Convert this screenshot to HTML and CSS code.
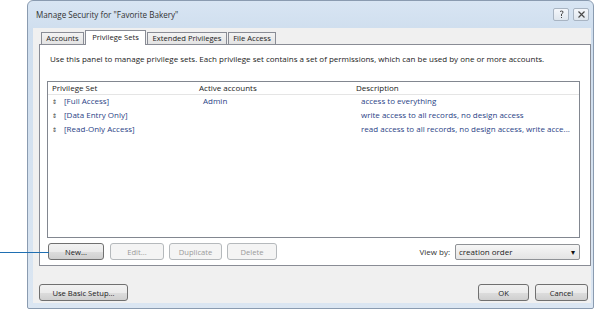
FILE: index.html
```html
<!DOCTYPE html>
<html>
	<head>
		<meta charset="UTF-8" />
		<title>Manage Security</title>
		<link rel="stylesheet" href="styles.css">
	</head>
	<body>
		<div class="stage">
			<div class="callout"></div>
			<div class="dialog">
				<div class="titlebar">
					<span class="title">Manage Security for "Favorite Bakery"</span>
					<div class="caption-buttons">
						<span class="cap-btn">
							<svg width="9" height="9" viewBox="0 0 9 9"><path d="M3 1.5 Q4.5 0.5 6 1.5 Q6.5 3 4.5 4 L4.5 6 M4.5 7 L4.5 8" fill="none" stroke="#4a4a4a" stroke-width="1"/></svg>
						</span>
						<span class="cap-btn">
							<svg width="9" height="9" viewBox="0 0 9 9"><path d="M1.5 1.5 L7.5 7.5 M7.5 1.5 L1.5 7.5" fill="none" stroke="#4a4a4a" stroke-width="1.2"/></svg>
						</span>
					</div>
				</div>
				<div class="client">
					<div class="tabs">
						<span class="tab tab-accounts">Accounts</span>
						<span class="tab tab-sets active">Privilege Sets</span>
						<span class="tab tab-ext">Extended Privileges</span>
						<span class="tab tab-file">File Access</span>
					</div>
					<div class="panel">
						<p class="intro">Use this panel to manage privilege sets. Each privilege set contains a set of permissions, which can be used by one or more accounts.</p>
						<div class="list">
							<div class="list-head">
								<span class="col-name">Privilege Set</span>
								<span class="col-acct">Active accounts</span>
								<span class="col-desc">Description</span>
							</div>
							<div class="row">
								<span class="col-name"><span class="handle">&#8661;</span>[Full Access]</span>
								<span class="col-acct">Admin</span>
								<span class="col-desc">access to everything</span>
							</div>
							<div class="row">
								<span class="col-name"><span class="handle">&#8661;</span>[Data Entry Only]</span>
								<span class="col-acct"></span>
								<span class="col-desc">write access to all records, no design access</span>
							</div>
							<div class="row">
								<span class="col-name"><span class="handle">&#8661;</span>[Read-Only Access]</span>
								<span class="col-acct"></span>
								<span class="col-desc">read access to all records, no design access, write acce...</span>
							</div>
						</div>
						<div class="panel-actions">
							<button class="btn btn-new">New...</button>
							<button class="btn btn-edit" disabled>Edit...</button>
							<button class="btn btn-dup" disabled>Duplicate</button>
							<button class="btn btn-del" disabled>Delete</button>
							<span class="spacer"></span>
							<label class="view-label">View by:</label>
							<span class="select">creation order<span class="arrow">&#9662;</span></span>
						</div>
					</div>
					<div class="footer">
						<button class="btn btn-wide">Use Basic Setup...</button>
						<span class="spacer"></span>
						<button class="btn btn-ok">OK</button>
						<button class="btn btn-cancel">Cancel</button>
					</div>
				</div>
			</div>
		</div>
	</body>
</html>
```

FILE: styles.css
```css
* {
	box-sizing: border-box;
}

html,
body {
	margin: 0;
	background-color: #ffffff;
	font-family: "Open Sans", "Noto Sans", sans-serif;
	font-size: 8px;
	color: #2b2b2b;
}

.stage {
	position: relative;
	width: 603px;
	height: 312px;
}

.callout {
	position: absolute;
	left: 0;
	top: 252px;
	width: 49px;
	height: 1px;
	background-color: #1f6fb2;
	z-index: 2;
}

.dialog {
	position: absolute;
	left: 27px;
	top: 0;
	width: 567px;
	height: 309px;
	border: 1px solid #8a9bb0;
	border-radius: 6px 6px 2px 2px;
	background: linear-gradient(#d8e5f3, #cfdeee 30px, #dbe6f2);
	display: flex;
	flex-direction: column;
}

.titlebar {
	height: 27px;
	display: flex;
	align-items: center;
	padding: 0 4px 0 8px;
}

.title {
	flex: 1;
	font-size: 8.1px;
	color: #333;
}

.caption-buttons {
	display: flex;
	gap: 4px;
	margin-top: -1px;
}

.cap-btn {
	width: 16px;
	height: 13px;
	border: 1px solid #a8b4c2;
	border-radius: 2px;
	background: linear-gradient(#f4f7fb, #dfe6ee);
	display: flex;
	align-items: center;
	justify-content: center;
}

.client {
	flex: 1;
	margin: 0 2px 5px 5px;
	background-color: #f0f0f0;
	padding: 1px 0 0 6px;
	display: flex;
	flex-direction: column;
}

.tabs {
	display: flex;
	align-items: flex-end;
	height: 15px;
	padding-left: 2px;
	font-size: 7.6px;
}

.tab {
	height: 12px;
	margin-right: 1px;
	border: 1px solid #898c95;
	border-bottom: none;
	background: linear-gradient(#f3f3f3, #e3e3e3);
	line-height: 11px;
	text-align: center;
	color: #222;
}

.tab.active {
	position: relative;
	z-index: 1;
	height: 15px;
	margin: 0 1px -1px 0;
	background: #ffffff;
	line-height: 12px;
}

.tab-accounts {
	width: 43px;
}

.tab-sets {
	width: 61px;
}

.tab-ext {
	width: 80px;
}

.tab-file {
	width: 48px;
}

.panel {
	height: 222px;
	border: 1px solid #898c95;
	background-color: #ffffff;
	padding: 8px 10px 0 7px;
	display: flex;
	flex-direction: column;
}

.intro {
	margin: 0 0 0 3px;
	height: 28px;
	color: #222;
}

.list {
	height: 157px;
	border: 1px solid #828790;
	background-color: #ffffff;
}

.list-head {
	display: flex;
	height: 13px;
	line-height: 11px;
	border-bottom: 1px solid #e5e5e5;
	color: #222;
	padding-left: 4px;
}

.row {
	display: flex;
	height: 14px;
	line-height: 14px;
	color: #2b3f86;
	padding-left: 4px;
}

.list-head + .row {
	margin-top: -1px;
}

.col-name {
	width: 147px;
}

.col-acct {
	width: 157px;
}

.row .col-acct {
	padding-left: 4px;
}

.row .col-desc {
	padding-left: 5px;
}

.handle {
	display: inline-block;
	width: 12px;
	font-size: 6px;
	color: #333;
}

.panel-actions {
	display: flex;
	align-items: center;
	margin-top: 5px;
	padding-left: 1px;
}

.spacer {
	flex: 1;
}

.btn {
	height: 17px;
	width: 55px;
	padding: 0;
	font-family: inherit;
	font-size: 7.6px;
	color: #222;
	border: 1px solid #707070;
	border-radius: 3px;
	background: linear-gradient(#f2f2f2 0, #ebebeb 50%, #dddddd 51%, #cfcfcf 100%);
}

.btn:disabled {
	border-color: #b5b9bc;
	background: #f4f4f4;
	color: #9a9a9a;
}

.btn-new {
	width: 56px;
}

.btn-edit {
	width: 54px;
	margin-left: 6px;
}

.btn-dup {
	width: 53px;
	margin-left: 5px;
}

.btn-del {
	width: 50px;
	margin-left: 5px;
}

.view-label {
	color: #333;
	margin-right: 5px;
}

.select {
	position: relative;
	width: 125px;
	height: 16px;
	border: 1px solid #8f9296;
	border-radius: 2px;
	background: linear-gradient(#f6f6f6, #e4e4e4);
	padding-left: 3px;
	line-height: 14px;
	color: #222;
}

.arrow {
	position: absolute;
	right: 4px;
	top: 0;
	font-size: 8px;
	color: #111;
}

.footer {
	display: flex;
	align-items: center;
	margin-top: 18px;
	padding-right: 3px;
}

.btn-wide {
	width: 89px;
}

.btn-ok {
	width: 51px;
}

.btn-cancel {
	width: 53px;
	margin-left: 6px;
}
```
